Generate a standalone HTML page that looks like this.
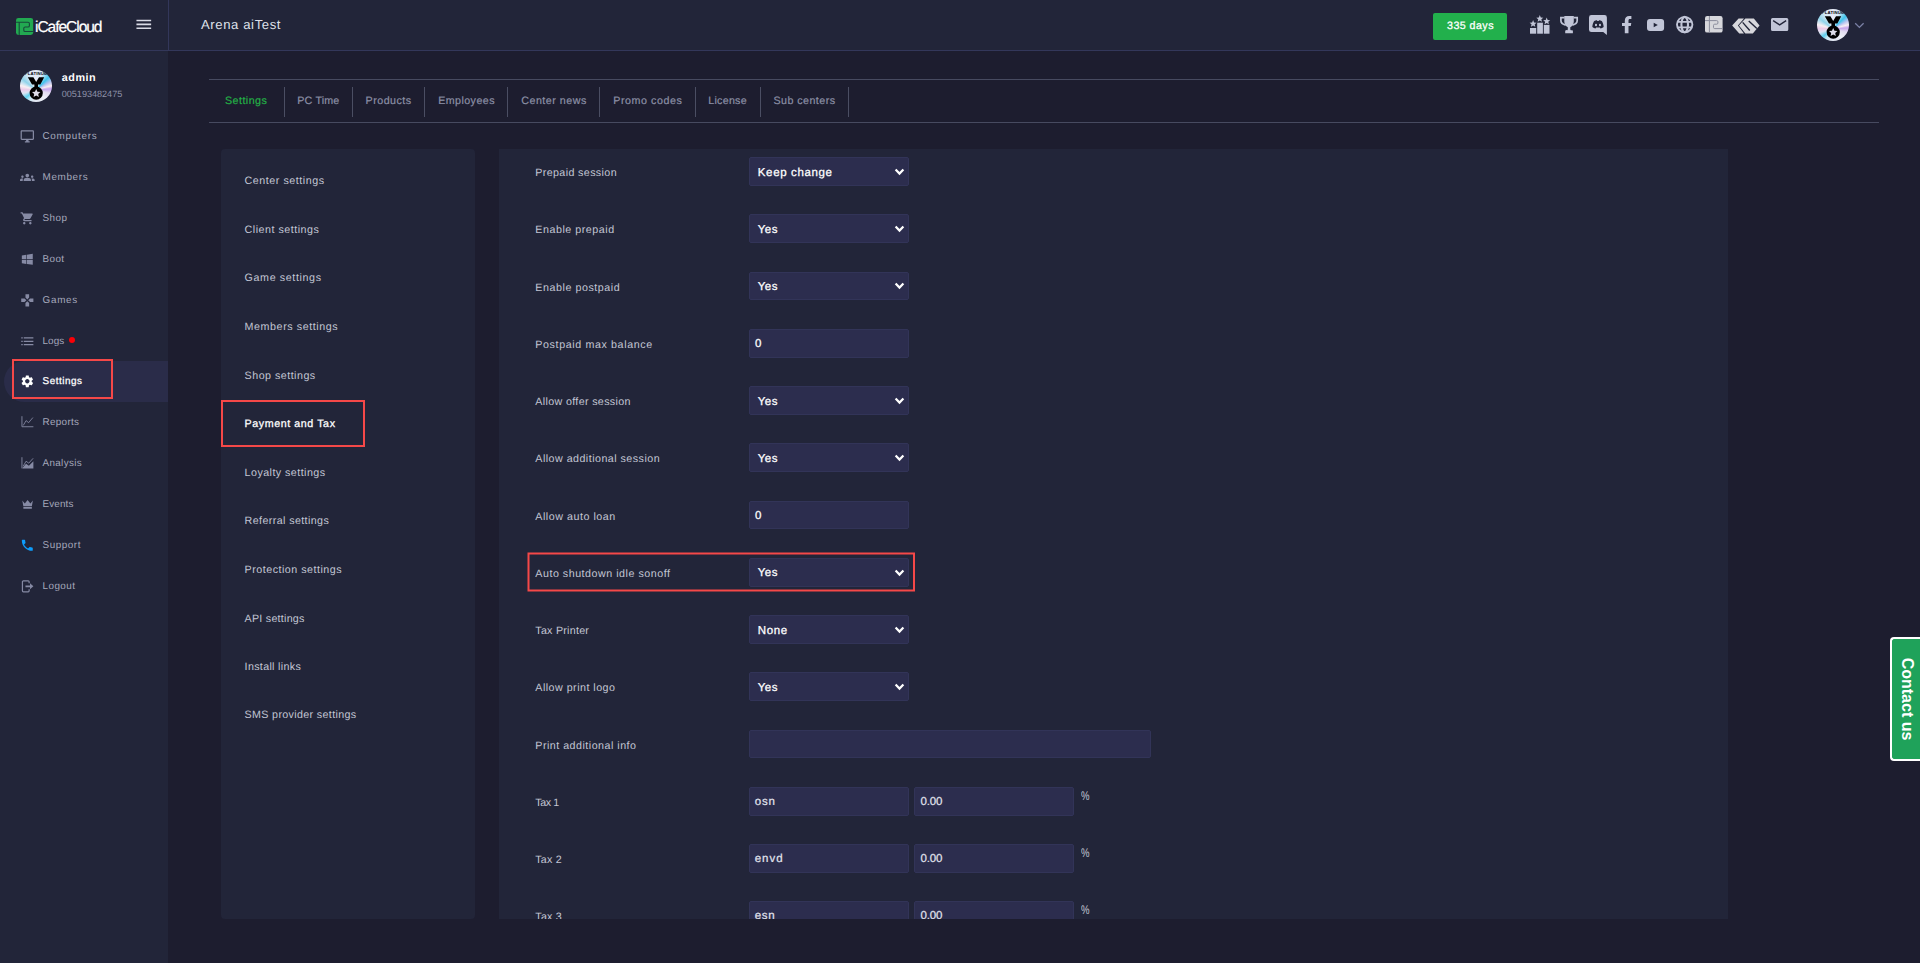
<!DOCTYPE html>
<html lang="en">
<head>
<meta charset="utf-8">
<title>iCafeCloud - Arena aiTest - Payment and Tax</title>
<style>
html,body{margin:0;padding:0}
body{width:1920px;height:963px;overflow:hidden;background:#1d1d2f;position:relative;font-family:"Liberation Sans", sans-serif}
a{color:inherit;text-decoration:none}
h1,strong,label{font-weight:400;margin:0}
.abs,.t,svg.i,.g{position:absolute}
.g{left:0;top:0;width:0;height:0}
.t{display:block;white-space:nowrap;line-height:1;margin:0;padding:0;text-rendering:geometricPrecision}
svg.i{fill:currentColor;overflow:visible}
#sidebar{left:0;top:0;width:168px;height:963px;background:#222539}
#topbar{left:0;top:0;width:1920px;height:50px;background:#222539;border-bottom:1px solid #33375a}
#hsep{left:168px;top:0;width:1px;height:50px;background:#33375a}
#active{left:4px;top:361px;width:164px;height:41px;background:#2a2c49;border-radius:21px 0 0 21px}
.red{border:2px solid #f54848;box-sizing:border-box}
.hl{height:1px;background:#474a60}
.vl{width:1px;background:#4b4e63}
.panel{background:#222539;border-radius:4px}
#clip{left:499px;top:149px;width:1229px;height:770px;overflow:hidden;background:#222539}
#form{position:absolute;left:-499px;top:-149px;width:1920px;height:963px;margin:0}
.box{position:absolute;height:29px;box-sizing:border-box;background:#2c2d4e;border:1px solid #323458;border-radius:2px}
.chev{position:absolute;fill:none;stroke:#fff;stroke-width:2.2}
#days{left:1433px;top:13px;width:74px;height:27px;background:#22b04c;border-radius:2px}
#contact{left:1890px;top:637px;width:30px;height:124px;box-sizing:border-box;background:#1fa25a;border:2px solid #fff;border-right:0;border-radius:4px 0 0 4px}
#contact span{position:absolute;left:15px;top:50%;transform:translate(-50%,-50%) rotate(90deg);white-space:nowrap;color:#fff;font-weight:700;font-size:16px;line-height:1}
.holo{width:32px;height:32px;border-radius:50%;background:conic-gradient(from 0deg at 50% 62%,#e6e9f5 0deg,#d9e9f5 21deg,#3fc4ec 45deg,#b9c4f0 61deg,#f8eef3 75deg,#c7a3ec 86deg,#e3dcf1 104deg,#eef0f7 133deg,#e4e8f3 165deg,#dfe6f2 195deg,#c5e9f4 215deg,#5dd1ee 233deg,#dfe4f2 255deg,#eccbea 271deg,#f8f0f3 286deg,#c5e2f1 297deg,#8fd3ea 308deg,#d5e7f4 331deg,#e6e9f5 360deg)}
</style>
</head>
<body>
<aside class="abs" id="sidebar">
<div class="abs" id="active"></div>
<div class="abs red" style="left:12px;top:359px;width:101px;height:40px"></div>
<div class="g" id="user">
<div class="abs holo" style="left:20px;top:70px"></div><svg class="i" style="left:20px;top:70px;width:32px;height:32px;overflow:hidden;border-radius:50%" viewBox="0 0 32 32"><path d="M7.8 7.3H13.4L16.2 12 19 7.3H24.2L20.4 14.6H18V17H14.4V14.6H12z" fill="#000"/><circle cx="16.2" cy="23.1" r="6.6" fill="#000"/><path d="M16.2 19l1.25 2.7 2.95.33-2.2 2 .62 2.9-2.62-1.48-2.62 1.48.62-2.9-2.2-2 2.95-.33z" fill="#dcdce8"/><text x="16.2" y="4.7" text-anchor="middle" font-size="4.3" font-weight="700" fill="#0a0a12" letter-spacing="0.1" font-family="Liberation Sans, sans-serif">PLATINUM</text></svg>
<strong class="t" style="left:61.70px;top:73px;font-size:10.8px;color:#ffffff;font-weight:700;letter-spacing:0.551px">admin</strong>
<span class="t" style="left:61.70px;top:90px;font-size:9.1px;color:#8d91a8;letter-spacing:-0.009px">005193482475</span>
</div>
<nav class="g" id="menu">
<svg class="i" style="left:19.7px;top:128.6px;width:14.6px;height:14.6px;color:#868aa4" viewBox="0 0 24 24"><path d="M21 2H3c-1.1 0-2 .9-2 2v12c0 1.1.9 2 2 2h7v2H8v2h8v-2h-2v-2h7c1.1 0 2-.9 2-2V4c0-1.1-.9-2-2-2zm0 14H3V4h18v12z"/></svg>
<a class="t" style="left:42.50px;top:132px;font-size:9.9px;color:#a5a8bb;letter-spacing:0.725px">Computers</a>
<svg class="i" style="left:19.7px;top:169.6px;width:14.6px;height:14.6px;color:#868aa4" viewBox="0 0 24 24"><path d="M12 12.75c1.63 0 3.07.39 4.24.9 1.08.48 1.76 1.56 1.76 2.73V18H6v-1.61c0-1.18.68-2.26 1.76-2.73 1.17-.52 2.61-.91 4.24-.91zM4 13c1.1 0 2-.9 2-2s-.9-2-2-2-2 .9-2 2 .9 2 2 2zm1.13 1.1c-.37-.06-.74-.1-1.13-.1-.99 0-1.93.21-2.78.58C.48 14.9 0 15.62 0 16.43V18h4.5v-1.61c0-.83.23-1.61.63-2.29zM20 13c1.1 0 2-.9 2-2s-.9-2-2-2-2 .9-2 2 .9 2 2 2zm4 3.43c0-.81-.48-1.53-1.22-1.85-.85-.37-1.79-.58-2.78-.58-.39 0-.76.04-1.13.1.4.68.63 1.46.63 2.29V18H24v-1.57zM12 6c1.66 0 3 1.34 3 3s-1.34 3-3 3-3-1.34-3-3 1.34-3 3-3z"/></svg>
<a class="t" style="left:42.50px;top:173px;font-size:9.9px;color:#a5a8bb;letter-spacing:0.657px">Members</a>
<svg class="i" style="left:19.7px;top:210.6px;width:14.6px;height:14.6px;color:#868aa4" viewBox="0 0 24 24"><path d="M7 18c-1.1 0-1.99.9-1.99 2S5.9 22 7 22s2-.9 2-2-.9-2-2-2zM1 2v2h2l3.6 7.59-1.35 2.45c-.16.28-.25.61-.25.96 0 1.1.9 2 2 2h12v-2H7.42c-.14 0-.25-.11-.25-.25l.03-.12.9-1.63h7.45c.75 0 1.41-.41 1.75-1.03l3.58-6.49c.08-.14.12-.31.12-.48 0-.55-.45-1-1-1H5.21l-.94-2H1zm16 16c-1.1 0-1.99.9-1.99 2s.89 2 1.99 2 2-.9 2-2-.9-2-2-2z"/></svg>
<a class="t" style="left:42.50px;top:214px;font-size:9.9px;color:#a5a8bb;letter-spacing:0.441px">Shop</a>
<svg class="i" style="left:19.7px;top:251.6px;width:14.6px;height:14.6px;color:#868aa4" viewBox="0 0 24 24"><path d="M3 5.6l7.4-1v7H3zM11.4 4.4L21 3v8.6h-9.6zM3 12.6h7.4v7l-7.4-1zM11.4 12.6H21V21l-9.6-1.4z"/></svg>
<a class="t" style="left:42.50px;top:255px;font-size:9.9px;color:#a5a8bb;letter-spacing:0.424px">Boot</a>
<svg class="i" style="left:19.7px;top:292.6px;width:14.6px;height:14.6px;color:#868aa4" viewBox="0 0 24 24"><path d="M15 7.5V2H9v5.5l3 3 3-3zM7.5 9H2v6h5.5l3-3-3-3zM9 16.5V22h6v-5.5l-3-3-3 3zM16.5 9l-3 3 3 3H22V9h-5.5z"/></svg>
<a class="t" style="left:42.50px;top:296px;font-size:9.9px;color:#a5a8bb;letter-spacing:0.739px">Games</a>
<svg class="i" style="left:19.7px;top:333.6px;width:14.6px;height:14.6px;color:#868aa4" viewBox="0 0 24 24"><path d="M2.1 5.2h2.4v2.1H2.1zM6.2 5.2H22v2.1H6.2zM2.1 10.9h2.4v2.1H2.1zM6.2 10.9H22v2.1H6.2zM2.1 16.6h2.4v2.1H2.1zM6.2 16.6H22v2.1H6.2z"/></svg>
<a class="t" style="left:42.50px;top:337px;font-size:9.9px;color:#a5a8bb;letter-spacing:0.126px">Logs</a>
<div class="abs" style="left:69px;top:337px;width:6px;height:6px;border-radius:50%;background:#fb0007"></div>
<svg class="i" style="left:19.7px;top:373.6px;width:14.6px;height:14.6px;color:#ffffff" viewBox="0 0 24 24"><path d="M19.14 12.94c.04-.3.06-.61.06-.94 0-.32-.02-.64-.07-.94l2.03-1.58c.18-.14.23-.41.12-.61l-1.92-3.32c-.12-.22-.37-.29-.59-.22l-2.39.96c-.5-.38-1.03-.7-1.62-.94l-.36-2.54c-.04-.24-.24-.41-.48-.41h-3.84c-.24 0-.43.17-.47.41l-.36 2.54c-.59.24-1.13.57-1.62.94l-2.39-.96c-.22-.08-.47 0-.59.22L2.74 8.87c-.12.21-.08.47.12.61l2.03 1.58c-.05.3-.09.63-.09.94s.02.64.07.94l-2.03 1.58c-.18.14-.23.41-.12.61l1.92 3.32c.12.22.37.29.59.22l2.39-.96c.5.38 1.03.7 1.62.94l.36 2.54c.05.24.24.41.48.41h3.84c.24 0 .44-.17.47-.41l.36-2.54c.59-.24 1.13-.56 1.62-.94l2.39.96c.22.08.47 0 .59-.22l1.92-3.32c.12-.22.07-.47-.12-.61l-2.01-1.58zM12 15.6c-1.98 0-3.6-1.62-3.6-3.6s1.62-3.6 3.6-3.6 3.6 1.62 3.6 3.6-1.62 3.6-3.6 3.6z"/></svg>
<a class="t" style="left:42.50px;top:377px;font-size:9.9px;color:#ffffff;-webkit-text-stroke:0.27px #ffffff;letter-spacing:0.545px">Settings</a>
<svg class="i" style="left:19.7px;top:414.6px;width:14.6px;height:14.6px;color:#868aa4" viewBox="0 0 24 24"><path d="M3.2 2V19.3H22" fill="none" stroke="currentColor" stroke-width="1.5"/><path d="M5.3 17.2L10 9.2 14.2 12.6 21.2 4.2" fill="none" stroke="currentColor" stroke-width="1.4"/></svg>
<a class="t" style="left:42.50px;top:418px;font-size:9.9px;color:#a5a8bb;letter-spacing:0.320px">Reports</a>
<svg class="i" style="left:19.7px;top:455.6px;width:14.6px;height:14.6px;color:#868aa4" viewBox="0 0 24 24"><path d="M3.2 2V20.4" fill="none" stroke="currentColor" stroke-width="1.5"/><path d="M4.2 20.4V19.5L10 12.8 14.6 16 22 8.8V20.4z"/><path d="M5.3 16.6L10 8.6 14.4 11.8 21.6 3.8" fill="none" stroke="currentColor" stroke-width="1.4"/></svg>
<a class="t" style="left:42.50px;top:459px;font-size:9.9px;color:#a5a8bb;letter-spacing:0.346px">Analysis</a>
<svg class="i" style="left:19.7px;top:496.6px;width:14.6px;height:14.6px;color:#868aa4" viewBox="0 0 24 24"><path d="M3.8 5.6L7.9 10.6 12.5 4.8 17.1 10.6 21.2 5.6 19.5 15.2H5.5zM5.5 16.5H19.5V19.2H5.5z"/></svg>
<a class="t" style="left:42.50px;top:500px;font-size:9.9px;color:#a5a8bb;letter-spacing:0.139px">Events</a>
<svg class="i" style="left:19.7px;top:537.6px;width:14.6px;height:14.6px;color:#0d9dfc" viewBox="0 0 24 24"><path d="M6.62 10.79c1.44 2.83 3.76 5.14 6.59 6.59l2.2-2.2c.27-.27.67-.36 1.02-.24 1.12.37 2.33.57 3.57.57.55 0 1 .45 1 1V20c0 .55-.45 1-1 1-9.39 0-17-7.61-17-17 0-.55.45-1 1-1h3.5c.55 0 1 .45 1 1 0 1.25.2 2.45.57 3.57.11.35.03.74-.25 1.02l-2.2 2.2z"/></svg>
<a class="t" style="left:42.50px;top:541px;font-size:9.9px;color:#a5a8bb;letter-spacing:0.551px">Support</a>
<svg class="i" style="left:19.7px;top:578.6px;width:14.6px;height:14.6px;color:#868aa4" viewBox="0 0 24 24"><path d="M15 7V4.5a1.5 1.5 0 0 0-1.5-1.5h-8A1.5 1.5 0 0 0 4 4.5v15A1.5 1.5 0 0 0 5.5 21h8a1.5 1.5 0 0 0 1.5-1.5V17" fill="none" stroke="currentColor" stroke-width="2"/><path d="M9 10.5h7.5V7L22 12l-5.5 5v-3.5H9z"/></svg>
<a class="t" style="left:42.50px;top:582px;font-size:9.9px;color:#a5a8bb;letter-spacing:0.456px">Logout</a>
</nav>
</aside>
<header class="abs" id="topbar">
<svg class="i" style="left:16px;top:18px;width:17.2px;height:17px" viewBox="0 0 17.2 17"><rect width="17.2" height="17" rx="2.4" fill="#22a951"/><path d="M3.2 4.2V17M0 4.2H12.1a1.3 1.3 0 0 1 1.3 1.3V7.7a1.3 1.3 0 0 1-1.3 1.3H9.1a1.3 1.3 0 0 0-1.3 1.3V12.2a1.3 1.3 0 0 0 1.3 1.3H17.2" fill="none" stroke="#17483a" stroke-width="1.1"/></svg>
<a class="t" style="left:35px;top:20px;font-size:15.6px;color:#fff;letter-spacing:-1.07px;-webkit-text-stroke:0.2px #fff">iCafeCloud</a>
<svg class="i" style="left:133.8px;top:14.9px;width:19.6px;height:18.8px;color:#d9dbe6" viewBox="0 0 24 24" preserveAspectRatio="none"><path d="M3 18h18v-2H3v2zm0-5h18v-2H3v2zm0-7v2h18V6H3z"/></svg>
<div class="abs" id="hsep"></div>
<h1 class="t" style="left:201.00px;top:18px;font-size:13.1px;color:#dfe1ea;letter-spacing:0.609px">Arena aiTest</h1>
<div class="abs" id="days"></div>
<a class="t" style="left:1447.00px;top:21px;font-size:10.7px;color:#ffffff;-webkit-text-stroke:0.27px #ffffff;letter-spacing:0.444px">335 days</a>
<svg class="i" style="left:1529px;top:14px;width:22px;height:20px;color:#c1c5d7" viewBox="0 0 22 20" preserveAspectRatio="none"><rect x="1" y="14" width="6.2" height="5.7"/><rect x="8.2" y="8.7" width="5.7" height="11"/><rect x="14.8" y="10.9" width="5.7" height="8.8"/><path d="M4.10 6.10L5.08 8.45L7.62 8.66L5.68 10.31L6.27 12.79L4.10 11.46L1.93 12.79L2.52 10.31L0.58 8.66L3.12 8.45z"/><path d="M10.80 1.10L11.78 3.45L14.32 3.66L12.38 5.31L12.97 7.79L10.80 6.46L8.63 7.79L9.22 5.31L7.28 3.66L9.82 3.45z"/><path d="M17.70 3.60L18.68 5.95L21.22 6.16L19.28 7.81L19.87 10.29L17.70 8.96L15.53 10.29L16.12 7.81L14.18 6.16L16.72 5.95z"/></svg>
<svg class="i" style="left:1560px;top:15.8px;width:18.1px;height:17.2px;color:#c1c5d7" viewBox="0 0 18.1 17.2" preserveAspectRatio="none"><path d="M4.3 0H13.8V5.5C13.8 8.8 11.8 10.6 10.3 11.2V13.5C10.3 14 11 14.3 12.9 14.6V17.2H5.2V14.6C7.1 14.3 7.8 14 7.8 13.5V11.2C6.3 10.6 4.3 8.8 4.3 5.5z"/><path d="M4.6 1.7H.9V4.6C.9 7 3.2 8.600 5.700 9.200M13.500 1.700H17.200V4.600C17.200 7 14.900 8.600 12.400 9.200" fill="none" stroke="currentColor" stroke-width="1.700"/></svg>
<svg class="i" style="left:1589px;top:14.9px;width:17.9px;height:20px;color:#c1c5d7" viewBox="0 0 17.9 20" preserveAspectRatio="none"><path d="M2.4 0H15.5A2.4 2.4 0 0 1 17.9 2.4V20L14.2 17.1H2.4A2.4 2.4 0 0 1 0 14.7V2.4A2.4 2.4 0 0 1 2.4 0z"/><path d="M3.3 12.1c.2-2.8 1.100-4.900 1.700-5.800 1.100-.7 2.200-1 2.900-1l.4.8h1.400l.4-.8c.7 0 1.800.3 2.900 1 .6.900 1.500 3 1.700 5.800-1 .9-2.300 1.300-3.200 1.400l-.6-1.100H7.100l-.6 1.100c-.9-.1-2.200-.5-3.200-1.400z" fill="#222539"/><ellipse cx="7" cy="10.1" rx="1.050" ry="1.250"/><ellipse cx="11" cy="10.1" rx="1.050" ry="1.250"/></svg>
<svg class="i" style="left:1621.9px;top:15.8px;width:9.4px;height:17.2px;color:#c1c5d7" viewBox="0 0 9.4 17.2" preserveAspectRatio="none"><path d="M2.8 17.2V9.9H0V6.9H2.8V4.7C2.8 1.8 4.5 0 7.2 0C8.2 0 9.4.1 9.4.1V2.9H8C6.8 2.9 6.5 3.6 6.5 4.5V6.9H9.3L8.8 9.9H6.5V17.2z"/></svg>
<svg class="i" style="left:1647.1px;top:18.6px;width:17.1px;height:11.9px;color:#c1c5d7" viewBox="0 0 17.1 11.9" preserveAspectRatio="none"><path d="M3 0H14.1A3 3 0 0 1 17.1 3V8.9A3 3 0 0 1 14.1 11.9H3A3 3 0 0 1 0 8.9V3A3 3 0 0 1 3 0zM6.7 3.7V8.3L10.8 6z"/></svg>
<svg class="i" style="left:1675.8px;top:15.9px;width:17.4px;height:17.2px;color:#c1c5d7" viewBox="0 0 17.4 17.2" preserveAspectRatio="none"><circle cx="8.7" cy="8.6" r="7.7" fill="none" stroke="currentColor" stroke-width="1.9"/><ellipse cx="8.7" cy="8.6" rx="3.3" ry="7.7" fill="none" stroke="currentColor" stroke-width="2.1"/><path d="M1.3 5.8H16.1M1.3 11.4H16.1" fill="none" stroke="currentColor" stroke-width="1.8"/></svg>
<svg class="i" style="left:1705.4px;top:16.4px;width:17.6px;height:16.6px;color:#d7d7dc" viewBox="0 0 17.6 16.6" preserveAspectRatio="none"><rect width="17.6" height="16.6" rx="2.2"/><path d="M4.4 0V16.6M0 4.6H11.7A1.2 1.2 0 0 1 12.9 5.8V7A1.2 1.2 0 0 1 11.7 8.2H9.7A1.2 1.2 0 0 0 8.5 9.4V11.4A1.2 1.2 0 0 0 9.7 12.6H17.6" fill="none" stroke="#8a8c9c" stroke-width="1"/></svg>
<svg class="i" style="left:1732px;top:17.5px;width:27.6px;height:15.6px;color:#d7d7dc" viewBox="0 0 27.6 15.6" preserveAspectRatio="none"><path d="M.16 7.56L6.59.46H12L5.91 7.56 12 15.52H7.27z"/><path d="M6.93 7.56L13.36.46H21.82L27.58 7.56 20.81 15.52H13.36z"/><path d="M10.65 4.35L17.76 12.47M16.75 2.99L24.87 10.44" fill="none" stroke="#222539" stroke-width="1.4"/></svg>
<svg class="i" style="left:1770.8px;top:18.4px;width:17.3px;height:13px;color:#c1c5d7" viewBox="0 0 17.7 13" preserveAspectRatio="none"><path d="M1.6 0H16.1A1.6 1.6 0 0 1 17.7 1.6V11.4A1.6 1.6 0 0 1 16.1 13H1.6A1.6 1.6 0 0 1 0 11.4V1.6A1.6 1.6 0 0 1 1.6 0z"/><path d="M2.2 2.6L8.85 6.9 15.5 2.6" fill="none" stroke="#222539" stroke-width="1.3"/></svg>
<div class="abs holo" style="left:1817px;top:9px"></div><svg class="i" style="left:1817px;top:9px;width:32px;height:32px;overflow:hidden;border-radius:50%" viewBox="0 0 32 32"><path d="M7.8 7.3H13.4L16.2 12 19 7.3H24.2L20.4 14.6H18V17H14.4V14.6H12z" fill="#000"/><circle cx="16.2" cy="23.1" r="6.6" fill="#000"/><path d="M16.2 19l1.25 2.7 2.95.33-2.2 2 .62 2.9-2.62-1.48-2.62 1.48.62-2.9-2.2-2 2.95-.33z" fill="#dcdce8"/><text x="16.2" y="4.7" text-anchor="middle" font-size="4.3" font-weight="700" fill="#0a0a12" letter-spacing="0.1" font-family="Liberation Sans, sans-serif">PLATINUM</text></svg>
<svg class="i" style="left:1854px;top:22px;width:11px;height:7px" viewBox="0 0 11 7"><path d="M1.2 1.2l4.2 4.2 4.2-4.2" fill="none" stroke="#7b81a6" stroke-width="1.3"/></svg>
</header>
<nav class="g" id="tabs">
<div class="abs hl" style="left:209px;top:79px;width:1670px"></div>
<div class="abs hl" style="left:209px;top:122px;width:1670px"></div>
<a class="t" style="left:224.90px;top:96px;font-size:10.7px;color:#23af46;-webkit-text-stroke:0.2px #23af46;letter-spacing:0.482px">Settings</a>
<div class="abs vl" style="left:284px;top:87px;height:30px"></div>
<a class="t" style="left:297.30px;top:96px;font-size:10.7px;color:#8b8fa5;-webkit-text-stroke:0.2px #8b8fa5;letter-spacing:0.169px">PC Time</a>
<div class="abs vl" style="left:352px;top:87px;height:30px"></div>
<a class="t" style="left:365.60px;top:96px;font-size:10.7px;color:#8b8fa5;-webkit-text-stroke:0.2px #8b8fa5;letter-spacing:0.473px">Products</a>
<div class="abs vl" style="left:424px;top:87px;height:30px"></div>
<a class="t" style="left:438.20px;top:96px;font-size:10.7px;color:#8b8fa5;-webkit-text-stroke:0.2px #8b8fa5;letter-spacing:0.428px">Employees</a>
<div class="abs vl" style="left:507px;top:87px;height:30px"></div>
<a class="t" style="left:521.20px;top:96px;font-size:10.7px;color:#8b8fa5;-webkit-text-stroke:0.2px #8b8fa5;letter-spacing:0.520px">Center news</a>
<div class="abs vl" style="left:599px;top:87px;height:30px"></div>
<a class="t" style="left:613.30px;top:96px;font-size:10.7px;color:#8b8fa5;-webkit-text-stroke:0.2px #8b8fa5;letter-spacing:0.563px">Promo codes</a>
<div class="abs vl" style="left:695px;top:87px;height:30px"></div>
<a class="t" style="left:708.20px;top:96px;font-size:10.7px;color:#8b8fa5;-webkit-text-stroke:0.2px #8b8fa5;letter-spacing:0.276px">License</a>
<div class="abs vl" style="left:760px;top:87px;height:30px"></div>
<a class="t" style="left:773.40px;top:96px;font-size:10.7px;color:#8b8fa5;-webkit-text-stroke:0.2px #8b8fa5;letter-spacing:0.465px">Sub centers</a>
<div class="abs vl" style="left:848px;top:87px;height:30px"></div>
</nav>
<aside class="g" id="settings-menu">
<div class="abs panel" style="left:221px;top:149px;width:254px;height:770px"></div>
<div class="abs red" style="left:221px;top:400px;width:144px;height:47px"></div>
<a class="t" style="left:244.60px;top:176px;font-size:10.7px;color:#c3c6d4;letter-spacing:0.544px">Center settings</a>
<a class="t" style="left:244.60px;top:225px;font-size:10.7px;color:#c3c6d4;letter-spacing:0.511px">Client settings</a>
<a class="t" style="left:244.60px;top:273px;font-size:10.7px;color:#c3c6d4;letter-spacing:0.624px">Game settings</a>
<a class="t" style="left:244.60px;top:322px;font-size:10.7px;color:#c3c6d4;letter-spacing:0.584px">Members settings</a>
<a class="t" style="left:244.60px;top:371px;font-size:10.7px;color:#c3c6d4;letter-spacing:0.486px">Shop settings</a>
<a class="t" style="left:244.60px;top:419px;font-size:10.7px;color:#ffffff;-webkit-text-stroke:0.27px #ffffff;letter-spacing:0.572px">Payment and Tax</a>
<a class="t" style="left:244.60px;top:468px;font-size:10.7px;color:#c3c6d4;letter-spacing:0.455px">Loyalty settings</a>
<a class="t" style="left:244.60px;top:516px;font-size:10.7px;color:#c3c6d4;letter-spacing:0.398px">Referral settings</a>
<a class="t" style="left:244.60px;top:565px;font-size:10.7px;color:#c3c6d4;letter-spacing:0.504px">Protection settings</a>
<a class="t" style="left:244.60px;top:614px;font-size:10.7px;color:#c3c6d4;letter-spacing:0.252px">API settings</a>
<a class="t" style="left:244.60px;top:662px;font-size:10.7px;color:#c3c6d4;letter-spacing:0.327px">Install links</a>
<a class="t" style="left:244.60px;top:710px;font-size:10.7px;color:#c3c6d4;letter-spacing:0.348px">SMS provider settings</a>
</aside>
<main class="abs" id="clip">
<form id="form">
<div class="g">
<label class="t" style="left:535.30px;top:168px;font-size:10.7px;color:#c3c6d4;letter-spacing:0.375px">Prepaid session</label>
<div class="box" style="left:749px;top:157px;width:160px"></div>
<svg class="chev" style="left:894.3px;top:167.5px;width:11px;height:8px" viewBox="0 0 11 8"><path d="M1.6 1.5l3.9 4.1 3.9-4.1"/></svg>
<span class="t" style="left:757.80px;top:168px;font-size:11.5px;color:#ffffff;-webkit-text-stroke:0.27px #ffffff;letter-spacing:0.640px">Keep change</span>
</div>
<div class="g">
<label class="t" style="left:535.30px;top:225px;font-size:10.7px;color:#c3c6d4;letter-spacing:0.530px">Enable prepaid</label>
<div class="box" style="left:749px;top:214px;width:160px"></div>
<svg class="chev" style="left:894.3px;top:224.5px;width:11px;height:8px" viewBox="0 0 11 8"><path d="M1.6 1.5l3.9 4.1 3.9-4.1"/></svg>
<span class="t" style="left:757.80px;top:225px;font-size:11.5px;color:#ffffff;-webkit-text-stroke:0.27px #ffffff;letter-spacing:0.417px">Yes</span>
</div>
<div class="g">
<label class="t" style="left:535.30px;top:283px;font-size:10.7px;color:#c3c6d4;letter-spacing:0.553px">Enable postpaid</label>
<div class="box" style="left:749px;top:272px;width:160px;height:28px"></div>
<svg class="chev" style="left:894.3px;top:282px;width:11px;height:8px" viewBox="0 0 11 8"><path d="M1.6 1.5l3.9 4.1 3.9-4.1"/></svg>
<span class="t" style="left:757.80px;top:282px;font-size:11.5px;color:#ffffff;-webkit-text-stroke:0.27px #ffffff;letter-spacing:0.417px">Yes</span>
</div>
<div class="g">
<label class="t" style="left:535.30px;top:340px;font-size:10.7px;color:#c3c6d4;letter-spacing:0.617px">Postpaid max balance</label>
<div class="box" style="left:749px;top:329px;width:160px"></div>
<span class="t" style="left:755.00px;top:339px;font-size:11.5px;color:#ffffff;-webkit-text-stroke:0.27px #ffffff">0</span>
</div>
<div class="g">
<label class="t" style="left:535.30px;top:397px;font-size:10.7px;color:#c3c6d4;letter-spacing:0.349px">Allow offer session</label>
<div class="box" style="left:749px;top:386px;width:160px"></div>
<svg class="chev" style="left:894.3px;top:396.5px;width:11px;height:8px" viewBox="0 0 11 8"><path d="M1.6 1.5l3.9 4.1 3.9-4.1"/></svg>
<span class="t" style="left:757.80px;top:397px;font-size:11.5px;color:#ffffff;-webkit-text-stroke:0.27px #ffffff;letter-spacing:0.417px">Yes</span>
</div>
<div class="g">
<label class="t" style="left:535.30px;top:454px;font-size:10.7px;color:#c3c6d4;letter-spacing:0.470px">Allow additional session</label>
<div class="box" style="left:749px;top:443px;width:160px"></div>
<svg class="chev" style="left:894.3px;top:453.5px;width:11px;height:8px" viewBox="0 0 11 8"><path d="M1.6 1.5l3.9 4.1 3.9-4.1"/></svg>
<span class="t" style="left:757.80px;top:454px;font-size:11.5px;color:#ffffff;-webkit-text-stroke:0.27px #ffffff;letter-spacing:0.417px">Yes</span>
</div>
<div class="g">
<label class="t" style="left:535.30px;top:512px;font-size:10.7px;color:#c3c6d4;letter-spacing:0.529px">Allow auto loan</label>
<div class="box" style="left:749px;top:501px;width:160px;height:28px"></div>
<span class="t" style="left:755.00px;top:511px;font-size:11.5px;color:#ffffff;-webkit-text-stroke:0.27px #ffffff">0</span>
</div>
<div class="g">
<label class="t" style="left:535.30px;top:569px;font-size:10.7px;color:#c3c6d4;letter-spacing:0.517px">Auto shutdown idle sonoff</label>
<div class="box" style="left:749px;top:558px;width:160px"></div>
<svg class="chev" style="left:894.3px;top:568.5px;width:11px;height:8px" viewBox="0 0 11 8"><path d="M1.6 1.5l3.9 4.1 3.9-4.1"/></svg>
<span class="t" style="left:757.80px;top:568px;font-size:11.5px;color:#ffffff;-webkit-text-stroke:0.27px #ffffff;letter-spacing:0.417px">Yes</span>
</div>
<div class="g">
<label class="t" style="left:535.30px;top:626px;font-size:10.7px;color:#c3c6d4;letter-spacing:0.252px">Tax Printer</label>
<div class="box" style="left:749px;top:615px;width:160px"></div>
<svg class="chev" style="left:894.3px;top:625.5px;width:11px;height:8px" viewBox="0 0 11 8"><path d="M1.6 1.5l3.9 4.1 3.9-4.1"/></svg>
<span class="t" style="left:757.80px;top:626px;font-size:11.5px;color:#ffffff;-webkit-text-stroke:0.27px #ffffff;letter-spacing:0.633px">None</span>
</div>
<div class="g">
<label class="t" style="left:535.30px;top:683px;font-size:10.7px;color:#c3c6d4;letter-spacing:0.481px">Allow print logo</label>
<div class="box" style="left:749px;top:672px;width:160px"></div>
<svg class="chev" style="left:894.3px;top:682.5px;width:11px;height:8px" viewBox="0 0 11 8"><path d="M1.6 1.5l3.9 4.1 3.9-4.1"/></svg>
<span class="t" style="left:757.80px;top:683px;font-size:11.5px;color:#ffffff;-webkit-text-stroke:0.27px #ffffff;letter-spacing:0.417px">Yes</span>
</div>
<div class="g">
<label class="t" style="left:535.30px;top:741px;font-size:10.7px;color:#c3c6d4;letter-spacing:0.490px">Print additional info</label>
<div class="box" style="left:749px;top:730px;width:402px;height:28px"></div>
</div>
<div class="g">
<label class="t" style="left:535.30px;top:798px;font-size:10.7px;color:#c3c6d4;letter-spacing:-0.437px">Tax 1</label>
<div class="box" style="left:749px;top:787px;width:160px"></div>
<span class="t" style="left:754.70px;top:797px;font-size:11.5px;color:#e2e4ee;-webkit-text-stroke:0.2px #e2e4ee;letter-spacing:0.877px">osn</span>
<div class="box" style="left:914px;top:787px;width:160px"></div>
<span class="t" style="left:920.40px;top:797px;font-size:11.5px;color:#e2e4ee;-webkit-text-stroke:0.2px #e2e4ee;letter-spacing:-0.097px">0.00</span>
<span class="t" style="left:1080.60px;top:790px;font-size:12.6px;color:#c3c6d4;transform:scaleX(.76);transform-origin:0 0">%</span>
</div>
<div class="g">
<label class="t" style="left:535.30px;top:855px;font-size:10.7px;color:#c3c6d4;letter-spacing:0.213px">Tax 2</label>
<div class="box" style="left:749px;top:844px;width:160px"></div>
<span class="t" style="left:754.70px;top:854px;font-size:11.5px;color:#e2e4ee;-webkit-text-stroke:0.2px #e2e4ee;letter-spacing:1.021px">envd</span>
<div class="box" style="left:914px;top:844px;width:160px"></div>
<span class="t" style="left:920.40px;top:854px;font-size:11.5px;color:#e2e4ee;-webkit-text-stroke:0.2px #e2e4ee;letter-spacing:-0.097px">0.00</span>
<span class="t" style="left:1080.60px;top:847px;font-size:12.6px;color:#c3c6d4;transform:scaleX(.76);transform-origin:0 0">%</span>
</div>
<div class="g">
<label class="t" style="left:535.30px;top:912px;font-size:10.7px;color:#c3c6d4;letter-spacing:0.238px">Tax 3</label>
<div class="box" style="left:749px;top:901px;width:160px"></div>
<span class="t" style="left:754.70px;top:911px;font-size:11.5px;color:#e2e4ee;-webkit-text-stroke:0.2px #e2e4ee;letter-spacing:0.727px">esn</span>
<div class="box" style="left:914px;top:901px;width:160px"></div>
<span class="t" style="left:920.40px;top:911px;font-size:11.5px;color:#e2e4ee;-webkit-text-stroke:0.2px #e2e4ee;letter-spacing:-0.097px">0.00</span>
<span class="t" style="left:1080.60px;top:904px;font-size:12.6px;color:#c3c6d4;transform:scaleX(.76);transform-origin:0 0">%</span>
</div>
<svg class="i" style="left:527px;top:552px;width:389px;height:40px" viewBox="0 0 389 40"><rect x="1.5" y="1.5" width="385.5" height="37" fill="none" stroke="#f54848" stroke-width="2"/></svg>
</form>
</main>
<a class="abs" id="contact"><span>Contact us</span></a>
</body>
</html>
